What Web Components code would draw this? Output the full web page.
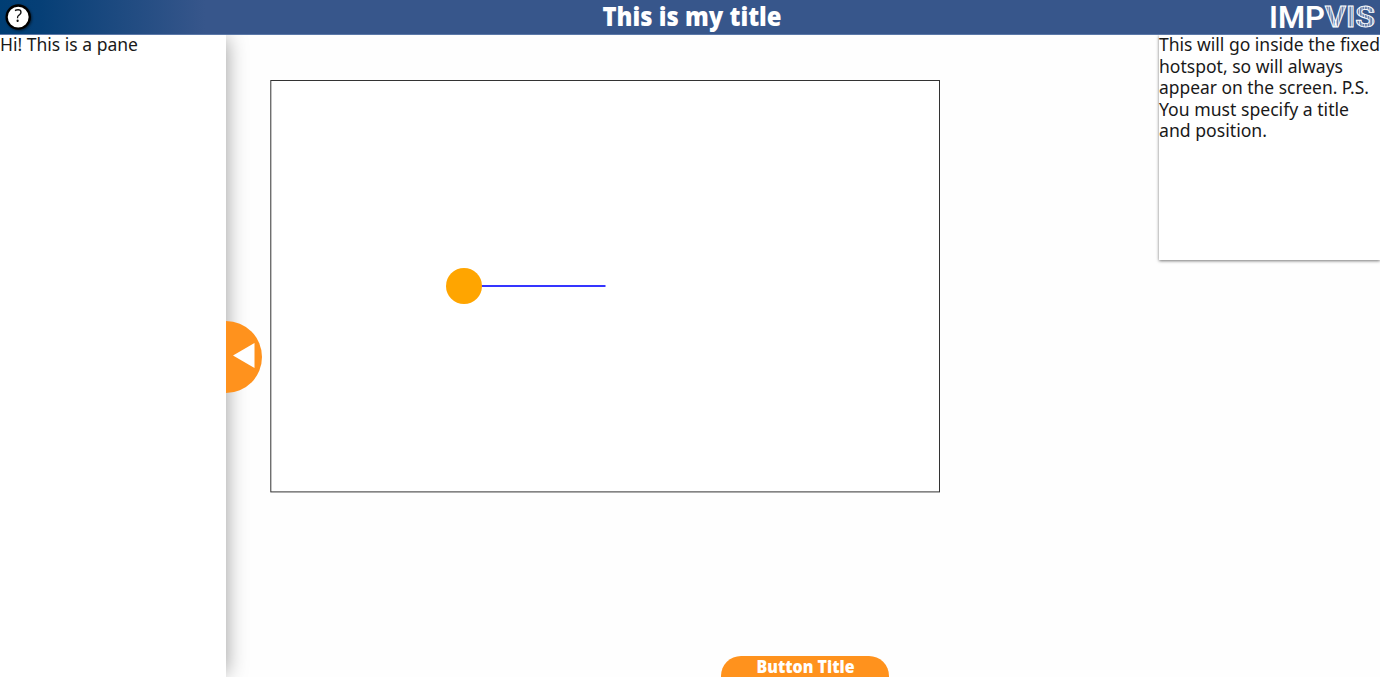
<!DOCTYPE html>
<html lang="en"><head><meta charset="utf-8"><title>This is my title</title>
<style>html,body{margin:0;height:100%;overflow:hidden;background:#fefefe}</style></head>
<body><vis-app></vis-app>
<script>
const define=(name,html,after)=>customElements.define(name,class extends HTMLElement{
  connectedCallback(){
    if(this.shadowRoot)return;
    this.attachShadow({mode:'open'}).innerHTML=html;
    if(after)after(this,this.shadowRoot);
  }
});

// One line of text condensed or widened to the given width.
define('fit-line',`<style>:host{display:block;height:var(--line,21.6px)}svg{display:block;width:100%;height:100%;overflow:visible}
text{font-family:var(--face,"Noto Sans"),"Open Sans",sans-serif;font-size:var(--size,17.4px);font-weight:var(--weight,400);fill:currentColor;word-spacing:var(--word,0)}</style><svg><text lengthAdjust="spacingAndGlyphs"></text></svg>`,
(el,root)=>{const t=root.querySelector('text');t.textContent=el.getAttribute('text');
  t.setAttribute('x',el.getAttribute('x')||0);t.setAttribute('y',el.getAttribute('base')||16.35);t.setAttribute('textLength',el.getAttribute('width'));});

define('help-button',`<style>:host{display:block;margin-left:5px}svg{display:block;overflow:visible;filter:drop-shadow(1px 1px 1px #0008)}</style>
<svg width="27" height="27"><circle cx="13.2" cy="13.1" r="11.6" fill="#fff" stroke="#000" stroke-width="2.3"/><text x="13.2" y="18.4" text-anchor="middle" font-family="Noto Sans,sans-serif" font-size="17.5" fill="#111">?</text></svg>`);

define('impvis-logo',`<style>:host{display:block}svg{display:block;overflow:visible}text{font-family:Roboto,sans-serif;fill:#fff}</style>
<svg width="112" height="34"><defs><pattern id="stripe" width="2.6" height="8" patternUnits="userSpaceOnUse"><path d="M0 0H1.2V8H0Z" fill="#cbd5e6"/><path d="M1.2 0H2.6V8H1.2Z" fill="#6880ab"/></pattern></defs>
<text x="1" y="27.5" font-size="30.5" font-weight="600" textLength="56" lengthAdjust="spacingAndGlyphs">IMP</text>
<text x="57" y="27" font-size="30" font-weight="700" textLength="50" lengthAdjust="spacingAndGlyphs" style="fill:url(#stripe);stroke:#fff;stroke-width:.9">VIS</text></svg>`);

define('title-bar',`<style>:host{display:grid;grid-template-columns:1fr 181px 1fr;align-items:center;box-sizing:border-box;height:35px;border-bottom:1px solid #5b78a8;color:#fff;background:linear-gradient(90deg,#003e74 0,#063f76 40px,#37568b 205px)}
impvis-logo{justify-self:end}fit-line{--line:34px;--size:26.5px;--weight:800;--face:"Open Sans"}</style>
<help-button></help-button><fit-line text="This is my title" width="179" x="2.5" base="26"></fit-line><impvis-logo></impvis-logo>`);

define('side-pane',`<style>:host{display:block;position:relative;z-index:1;width:225.5px;background:#fff;box-shadow:3px 0 20px -3px #0006}
.toggle{position:absolute;left:100%;top:286px}svg{display:block}</style>
<fit-line text="Hi! This is a pane" width="138"></fit-line>
<svg class="toggle" width="37" height="72"><circle cx="0" cy="36" r="36" fill="#ff921d"/><path d="M7 34.5 28.5 22V47Z" fill="#fff"/></svg>`);

define('vis-canvas',`<style>:host{display:block}svg{display:block}</style>
<svg width="670" height="413"><rect x=".8" y=".5" width="668.7" height="411.4" fill="#fff" stroke="#333"/><path d="M193 206H335.5" stroke="#3535ff" stroke-width="2"/><circle cx="194" cy="206" r="18" fill="#ffa500"/></svg>`);

define('fixed-hotspot',`<style>:host{display:block;height:225px;background:#fff;box-shadow:0 1px 3px #0008}</style>
<fit-line text="This will go inside the fixed" width="221"></fit-line><fit-line text="hotspot, so will always" width="184"></fit-line>
<fit-line text="appear on the screen. P.S." width="210"></fit-line><fit-line text="You must specify a title" width="190"></fit-line><fit-line text="and position." width="108"></fit-line>`);

define('hotspot-button',`<style>:host{display:block;width:168px;height:21px;background:#ff921d;border-radius:20px 20px 0 0;color:#fff;--size:17.5px;--weight:800;--face:"Open Sans";--line:21px}</style><fit-line text="Button Title" width="98" x="35.5" base="16.5"></fit-line>`);

define('vis-app',`<style>:host{display:grid;grid-template:35px 1fr/226px 1fr 221px;height:100vh;color:#191919}
title-bar{grid-column:1/-1;position:relative;z-index:2}
main{display:flex;flex-direction:column;justify-content:space-between;padding:45px 0 0 44px}
hotspot-button{margin-left:450.5px}</style>
<title-bar></title-bar><side-pane></side-pane><main><vis-canvas></vis-canvas><hotspot-button></hotspot-button></main><aside><fixed-hotspot></fixed-hotspot></aside>`);
</script></body></html>
